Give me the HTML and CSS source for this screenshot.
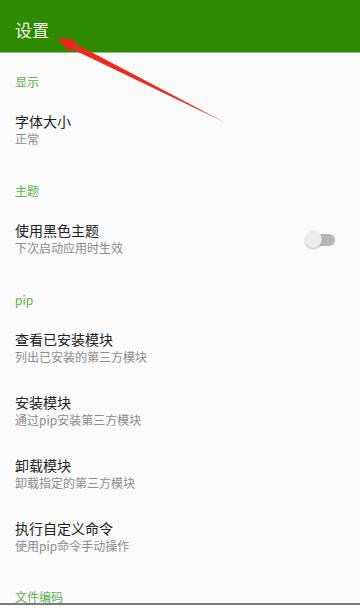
FILE: index.html
```html
<!DOCTYPE html>
<html lang="zh-CN">
<head>
<meta charset="utf-8">
<title>设置</title>
<link rel="stylesheet" href="styles.css">
</head>
<body>
<div class="screen">
  <header class="appbar"><h1 class="appbar-title">设置</h1></header>
  <main class="prefs">
    <div class="cat">显示</div>
    <div class="item"><div class="item-text"><div class="item-title">字体大小</div><div class="item-sub">正常</div></div></div>

    <div class="cat">主题</div>
    <div class="item"><div class="item-text"><div class="item-title">使用黑色主题</div><div class="item-sub">下次启动应用时生效</div></div>
      <div class="switch"><span class="track"></span><span class="thumb"></span></div>
    </div>

    <div class="cat">pip</div>
    <div class="item"><div class="item-text"><div class="item-title">查看已安装模块</div><div class="item-sub">列出已安装的第三方模块</div></div></div>
    <div class="item"><div class="item-text"><div class="item-title">安装模块</div><div class="item-sub">通过pip安装第三方模块</div></div></div>
    <div class="item"><div class="item-text"><div class="item-title">卸载模块</div><div class="item-sub">卸载指定的第三方模块</div></div></div>
    <div class="item"><div class="item-text"><div class="item-title">执行自定义命令</div><div class="item-sub">使用pip命令手动操作</div></div></div>

    <div class="cat cat-last">文件编码</div>
  </main>
  <svg class="arrow" width="360" height="130" viewBox="0 0 360 130">
    <polygon points="57,38 76,40 70,52" fill="#f0211a"/>
    <polygon points="75,43.5 71,48.5 224,122" fill="#ee2a20"/>
  </svg>
</div>
</body>
</html>
```
FILE: styles.css
```css
html, body {
  margin: 0;
  padding: 0;
  background: #ffffff;
}
body {
  font-family: "Noto Sans CJK SC", "Noto Sans", sans-serif;
}
.screen {
  position: relative;
  width: 360px;
  height: 603px;
  overflow: hidden;
  background: #fafafa;
  border-bottom: 2px solid #7a7a7a;
}
.appbar {
  height: 53px;
  background: #2e8a00;
  box-sizing: border-box;
  padding: 19px 15px 0;
  border-bottom: 1px solid #8fbf7a;
}
.appbar-title {
  margin: 0;
  font-size: 17px;
  line-height: 22px;
  font-weight: 400;
  color: #f2f7ee;
}
.prefs {
  display: flex;
  flex-direction: column;
}
.cat {
  padding: 21px 15px 9px;
  font-size: 12px;
  line-height: 16px;
  color: #62b051;
}
.cat-last {
  padding-top: 20px;
}
.item {
  display: flex;
  align-items: center;
  padding: 14px 15px;
}
.item-text {
  flex: 1;
}
.item-title {
  font-size: 14px;
  line-height: 17px;
  color: #222222;
}
.item-sub {
  font-size: 12px;
  line-height: 18px;
  color: #8c8c8c;
}
.switch {
  position: relative;
  width: 30px;
  height: 18px;
  margin-right: 10px;
}
.track {
  position: absolute;
  left: 8px;
  top: 3px;
  width: 22px;
  height: 12px;
  border-radius: 6px;
  background: #b5b5b5;
}
.thumb {
  position: absolute;
  left: 0;
  top: 0;
  width: 17px;
  height: 17px;
  border-radius: 50%;
  background: #ececec;
  box-shadow: 0 1px 2px rgba(0,0,0,0.25);
}
.arrow {
  position: absolute;
  left: 0;
  top: 0;
  pointer-events: none;
}
```
